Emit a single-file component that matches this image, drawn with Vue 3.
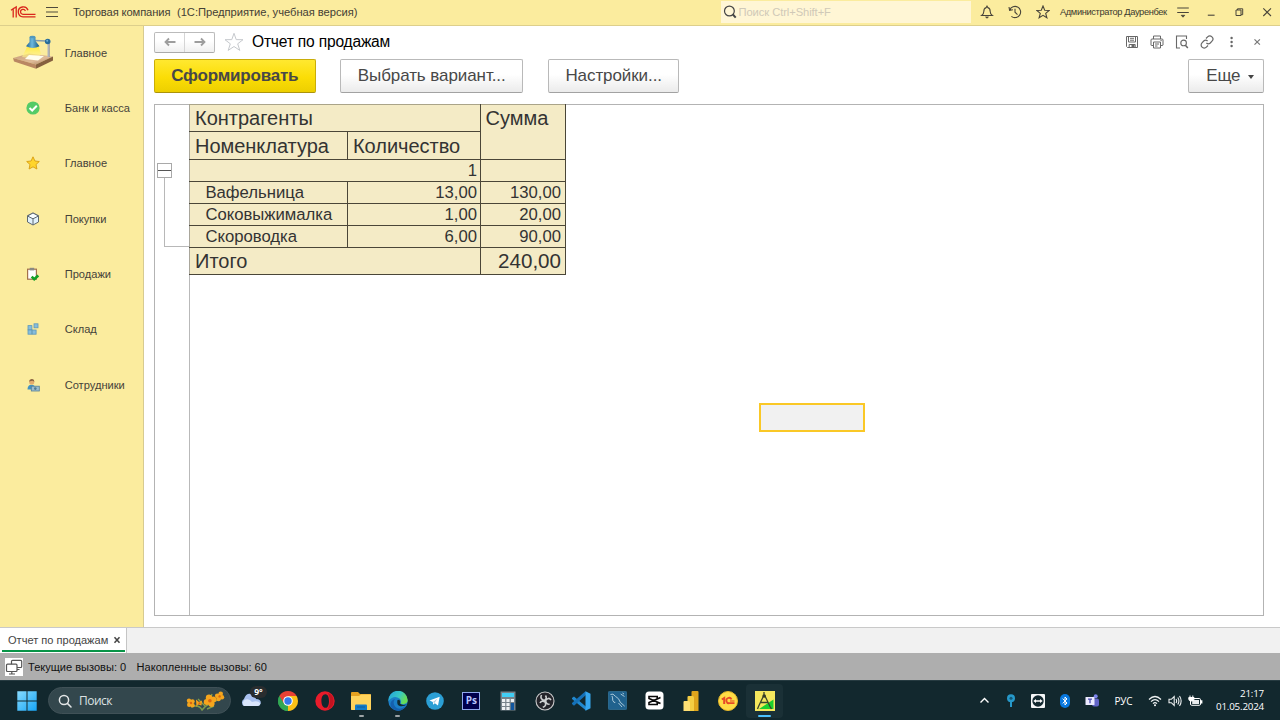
<script setup>
const rows = [
  { name: 'Вафельница', qty: '13,00', sum: '130,00' },
  { name: 'Соковыжималка', qty: '1,00', sum: '20,00' },
  { name: 'Скороводка', qty: '6,00', sum: '90,00' },
]
const sections = [
  { id: 'main', label: 'Главное' },
  { id: 'bank', label: 'Банк и касса' },
  { id: 'star', label: 'Главное' },
  { id: 'buy', label: 'Покупки' },
  { id: 'sell', label: 'Продажи' },
  { id: 'stock', label: 'Склад' },
  { id: 'staff', label: 'Сотрудники' },
]
</script>

<template>
  <div class="screen">
    <header class="titlebar">
      <svg class="logo" width="26" height="14" viewBox="0 0 26 14" fill="none" stroke="#d9261c" stroke-width="1.4">
        <path d="M1 5.3L3.2 3.8V12.5M3.2 3.8L6.2 2V12.5" stroke-width="1.3" />
        <path d="M18 5.2A5 5 0 1 0 13 11.9H25.5" />
        <path d="M15.4 6A2.5 2.5 0 1 0 13 9.3H25.5" stroke-width="1.2" />
      </svg>
      <svg class="burger" width="12" height="12" viewBox="0 0 12 12" stroke="#4e4a3c" stroke-width="1.1"><path d="M0 1.5H12M0 6H12M0 10.5H12" /></svg>
      <span class="app-name">Торговая компания</span>
      <span class="app-ver">(1С:Предприятие, учебная версия)</span>
      <div class="search">
        <svg width="14" height="14" viewBox="0 0 14 14" fill="none" stroke="#444"><circle cx="6.4" cy="6" r="4.9" stroke-width="1.2" /><path d="M9.9 9.5L12.7 12.6" stroke-width="2" /></svg>
        <span>Поиск Ctrl+Shift+F</span>
      </div>
      <div class="top-icons">
        <svg width="14" height="14" viewBox="0 0 14 14" fill="none" stroke="#49453a" stroke-width="1.1"><path d="M1.7 10.5H12.3Q10.2 9 10.2 6.5Q10.2 3.2 7.8 2.6L7 1.2L6.2 2.6Q3.8 3.2 3.8 6.5Q3.8 9 1.7 10.5Z" /><path d="M5.6 12H8.4L7 13.2Z" fill="#49453a" stroke-width=".8" /></svg>
        <svg width="14" height="14" viewBox="0 0 14 14" fill="none" stroke="#49453a" stroke-width="1.1"><path d="M1.8 5A5.6 5.6 0 1 1 3.4 11.3M1 2L1.6 5.3L4.9 4.8M7 3.7V7.2L9.5 9.6" /></svg>
        <svg width="14" height="14" viewBox="0 0 14 14" fill="none" stroke="#49453a" stroke-width="1.1"><path d="M7 1L8.7 5.2L13.2 5.5L9.7 8.4L10.9 12.8L7 10.4L3.1 12.8L4.3 8.4L.8 5.5L5.3 5.2Z" /></svg>
      </div>
      <span class="user">Администратор Дауренбек</span>
      <div class="win-icons">
        <svg width="14" height="14" viewBox="0 0 14 14" stroke="#49453a" stroke-width="1.1"><path d="M1.2 3H12.8M1.2 7.5H12.8" /><path d="M5.2 10.3H8.8L7 12.2Z" fill="#49453a" stroke-width=".8" /></svg>
        <svg width="14" height="14" viewBox="0 0 14 14" stroke="#49453a" stroke-width="1.1"><path d="M3.8 10.2H10.6" /></svg>
        <svg width="14" height="14" viewBox="0 0 14 14" fill="none" stroke="#49453a" stroke-width="1"><path d="M4 5H9V10.5H4ZM5.5 5V3.8H10.7V9.7H9" /></svg>
        <svg width="14" height="14" viewBox="0 0 14 14" stroke="#49453a" stroke-width="1.1"><path d="M3.3 3.3L11 11M11 3.3L3.3 11" /></svg>
      </div>
    </header>

    <div class="body">
      <nav class="sidebar">
        <div v-for="s in sections" :key="s.id" class="section">
          <div class="section-icon">
            <svg v-if="s.id === 'main'" width="44" height="38" viewBox="0 0 44 38">
              <defs>
                <linearGradient id="wood" x1="0" x2="1" y2="1"><stop stop-color="#c79c78" /><stop offset=".6" stop-color="#dfbb98" /><stop offset="1" stop-color="#9f7557" /></linearGradient>
                <linearGradient id="lamp" x1="0" x2="1"><stop stop-color="#1c5f8b" /><stop offset=".45" stop-color="#6db8dd" /><stop offset="1" stop-color="#155681" /></linearGradient>
                <linearGradient id="beam" x2="0" y2="1"><stop stop-color="#ffe83a" /><stop offset="1" stop-color="#fff7a0" stop-opacity=".5" /></linearGradient>
              </defs>
              <path d="M2 24L18 19.5L42 22.5L25 30.5Z" fill="url(#wood)" />
              <path d="M2 24L25 30.5V34.8L3 27.5Z" fill="#b98763" /><path d="M25 30.5L42 22.5V26.5L25 34.8Z" fill="#86603f" />
              <path d="M16 13L11 23L26 25L30 20L27.5 12Z" fill="url(#beam)" />
              <path d="M18 21L33 22L27 26.5L14 25Z" fill="#fffdec" />
              <path d="M23 6.5L36 7" stroke="#849bab" stroke-width="1.5" /><path d="M37.5 8V23" stroke="#b5b7bf" stroke-width="2" /><path d="M38.3 8V23" stroke="#85878f" stroke-width=".6" />
              <circle cx="36.7" cy="7.5" r="2.8" fill="#286b99" /><circle cx="36.2" cy="6.8" r="1" fill="#6fb0d3" />
              <path d="M18.5 3H24.5V7L28.5 12.3Q22 15.5 15 12.3L18.5 8Z" fill="url(#lamp)" /><ellipse cx="21.5" cy="3" rx="3" ry="1.3" fill="#5298bd" />
            </svg>
            <svg v-else-if="s.id === 'bank'" width="14" height="14" viewBox="0 0 14 14"><circle cx="7" cy="7" r="6.6" fill="#54cb67" /><path d="M3.5 7L6.2 9.5L10.8 4.8" fill="none" stroke="#fff" stroke-width="2" /></svg>
            <svg v-else-if="s.id === 'star'" width="14" height="14" viewBox="0 0 14 14"><path d="M7 .8L8.9 5L13.3 5.5L10 8.5L10.9 13L7 10.8L3.1 13L4 8.5L.7 5.5L5.1 5Z" fill="#ffd52c" stroke="#dba318" /></svg>
            <svg v-else-if="s.id === 'buy'" width="14" height="14" viewBox="0 0 14 14" stroke="#5e6870" stroke-width="1"><path d="M7 1L12.5 3.7V10L7 13L1.5 10V3.7Z" fill="#e1f1fb" /><path d="M1.5 4L7 6.8L12.5 4L7 1Z" fill="#f8fdff" /><path d="M7 6.8V13" /></svg>
            <svg v-else-if="s.id === 'sell'" width="14" height="14" viewBox="0 0 14 14"><rect x="1.6" y="2.2" width="8.8" height="10" fill="#fff" stroke="#a3704d" stroke-width="1.2" /><rect x="3.7" y=".8" width="4.5" height="2.6" fill="#8a8a84" /><path d="M5.7 9.7L8.2 12.2L12.3 8.5" fill="none" stroke="#13a126" stroke-width="2.6" /></svg>
            <svg v-else-if="s.id === 'stock'" width="14" height="14" viewBox="0 0 14 14" fill="#86bddc" stroke="#5e98b9" stroke-width=".8"><rect x="2" y="3.6" width="3.9" height="4.2" /><rect x="2" y="8" width="3.9" height="4.2" /><rect x="6.2" y="8" width="3.9" height="4.2" /><rect x="8" y="1.8" width="4" height="4" /></svg>
            <svg v-else width="14" height="14" viewBox="0 0 14 14"><path d="M1.5 11.5Q1.5 6.7 5.5 6.7Q9.5 6.7 9.5 11.5Z" fill="#4293c2" /><circle cx="5.7" cy="4" r="2.6" fill="#e5ad6d" /><path d="M3 3.5Q3.5 .6 6.2 1Q8.4 1.3 8.4 3.8L6.5 2.7Z" fill="#8b6543" /><rect x="5.3" y="8.2" width="8" height="4.8" fill="#9bbccd" stroke="#557f98" stroke-width=".8" /><circle cx="9.3" cy="10.6" r="1.3" fill="#4f7b91" /></svg>
          </div>
          <span>{{ s.label }}</span>
        </div>
      </nav>

      <main class="content">
        <div class="form-head">
          <div class="nav-btns">
            <span><svg width="14" height="10" viewBox="0 0 14 10" fill="none" stroke="#9d9d9d" stroke-width="1.8"><path d="M12.5 5H3M6 1.5L2.5 5L6 8.5" /></svg></span>
            <span><svg width="14" height="10" viewBox="0 0 14 10" fill="none" stroke="#9d9d9d" stroke-width="1.8"><path d="M1.5 5H11M8 1.5L11.5 5L8 8.5" /></svg></span>
          </div>
          <svg class="fav" width="22" height="20" viewBox="0 0 22 20" fill="#fff" stroke="#c6c9cd"><path d="M11 1.3L13.2 7.6L20 7.7L14.7 11.8L16.8 18.4L11 14.5L5.2 18.4L7.3 11.8L2 7.7L8.8 7.6Z" /></svg>
          <h1>Отчет по продажам</h1>
          <div class="form-icons">
            <svg width="14" height="14" viewBox="0 0 14 14" fill="none" stroke="#686868" stroke-width="1"><path d="M1.5 1.5H12.5V12.5H2.5L1.5 11.5ZM3.5 1.5V7H10.5V1.5M5 3.3H9M5 5.2H9M4.2 12.5V9.5H10.2V12.5" /><rect x="7" y="10" width="2" height="2" fill="#686868" /></svg>
            <svg width="14" height="14" viewBox="0 0 14 14" fill="none" stroke="#686868" stroke-width="1"><path d="M3.5 4V1H10.5V4M3.5 10.5H1.5Q1 10.5 1 10V5Q1 4 2 4H12Q13 4 13 5V10Q13 10.5 12 10.5H10.5M3.5 7H10.5V13H3.5ZM5 9H9M5 11H7.5M10.5 5.6H11.7" /></svg>
            <svg width="14" height="14" viewBox="0 0 14 14" fill="none" stroke="#686868" stroke-width="1.1"><path d="M5 13H1.5V1H11.5V4" /><circle cx="8.6" cy="7.9" r="2.8" /><path d="M10.4 10.2L12.8 13" stroke-width="1.5" /></svg>
            <svg width="14" height="14" viewBox="0 0 14 14" fill="none" stroke="#686868" stroke-width="1.2"><path d="M6 3.5L7.6 1.9A2.9 2.9 0 0 1 12 6.2L10.3 8Q8.3 9.7 6.4 8M8 10.5L6.4 12.1A2.9 2.9 0 0 1 2 7.8L3.7 6Q5.7 4.3 7.6 6" /></svg>
            <svg width="14" height="14" viewBox="0 0 14 14" fill="#666"><circle cx="6.6" cy="3" r="1.2" /><circle cx="6.6" cy="7" r="1.2" /><circle cx="6.6" cy="11" r="1.2" /></svg>
            <svg width="14" height="14" viewBox="0 0 14 14" stroke="#777" stroke-width="1.2"><path d="M4.5 4.3L9.9 9.7M9.9 4.3L4.5 9.7" /></svg>
          </div>
        </div>

        <div class="commands">
          <button class="primary">Сформировать</button>
          <button class="choose">Выбрать вариант...</button>
          <button class="setup">Настройки...</button>
          <button class="more">Еще <i></i></button>
        </div>

        <div class="report">
          <div class="gutter">
            <div class="fold"></div>
            <div class="fold-line"></div>
          </div>
          <table>
            <colgroup><col class="c1" /><col class="c2" /><col class="c3" /></colgroup>
            <tbody>
              <tr class="h1"><td colspan="2"><div>Контрагенты</div></td><td rowspan="2" class="top"><div>Сумма</div></td></tr>
              <tr class="h2"><td><div>Номенклатура</div></td><td><div>Количество</div></td></tr>
              <tr class="row"><td colspan="2" class="num"><div>1</div></td><td></td></tr>
              <tr v-for="r in rows" :key="r.name" class="row">
                <td class="item"><div>{{ r.name }}</div></td><td class="num"><div>{{ r.qty }}</div></td><td class="num sum"><div>{{ r.sum }}</div></td>
              </tr>
              <tr class="total"><td colspan="2"><div>Итого</div></td><td class="num sum"><div>240,00</div></td></tr>
            </tbody>
          </table>
          <div class="cell-cursor"></div>
        </div>
      </main>
    </div>

    <div class="tabs">
      <div class="tab"><span>Отчет по продажам</span>
        <svg width="8" height="8" viewBox="0 0 8 8" stroke="#444" stroke-width="1.5"><path d="M1.5 1.2L6.5 6.8M6.5 1.2L1.5 6.8" /></svg>
      </div>
    </div>

    <div class="status">
      <div class="status-icon"><svg width="18" height="18" viewBox="0 0 18 18" fill="#fff" stroke="#555" stroke-width="1.2"><rect x="6.5" y="2.3" width="10.2" height="7.2" rx="1" /><rect x="1.5" y="6.2" width="10.5" height="7.3" rx="1" /><path d="M6.8 13.5V16M4 16H10M12 11.5H14.5" /></svg></div>
      <span class="calls">Текущие вызовы: 0</span>
      <span class="stored">Накопленные вызовы: 60</span>
    </div>

    <footer class="taskbar">
      <svg class="start" width="20" height="20" viewBox="0 0 20 20"><defs><linearGradient id="win" x2="1" y2="1"><stop stop-color="#87dbff" /><stop offset="1" stop-color="#16a4f5" /></linearGradient></defs><path d="M.3.3H9.5V9.5H.3ZM10.5.3H19.7V9.5H10.5ZM.3 10.5H9.5V19.7H.3ZM10.5 10.5H19.7V19.7H10.5Z" fill="url(#win)" /></svg>
      <div class="find">
        <svg width="14" height="14" viewBox="0 0 14 14" fill="none" stroke="#e3e6e7" stroke-width="1.5"><circle cx="6" cy="6" r="4.6" /><path d="M9.4 9.4L13 13" stroke-linecap="round" /></svg>
        <span>Поиск</span>
        <svg class="flowers" width="40" height="20" viewBox="0 0 40 20">
          <path d="M6 16Q14 13 17 19Q22 12 36 8M13 8L20 15M29 15L22 18M27 3L24 12" stroke="#7e9b4c" stroke-width="1.4" fill="none" />
          <g fill="#f6a51d"><circle cx="4" cy="9.8" r="2.2" /><circle cx="7.5" cy="10.5" r="2.2" /><circle cx="4.2" cy="13.7" r="2.2" /><circle cx="7.5" cy="14.2" r="2.2" /><path d="M11 8.5L14 11L17 9.5L16.5 14.5L13 13.5L11.5 16Z" /><circle cx="24" cy="6.8" r="3.2" /><circle cx="28.3" cy="8.6" r="3" /><circle cx="21.7" cy="11" r="3" /><circle cx="26.5" cy="12.8" r="3.1" /><circle cx="35.7" cy="2.7" r="2.3" /><circle cx="32.3" cy="4.8" r="2.4" /><circle cx="37" cy="6.3" r="2.2" /><circle cx="33.5" cy="8" r="2.3" /></g>
          <g fill="#da6611"><circle cx="6" cy="12" r="1.2" /><circle cx="14.5" cy="12.3" r="1.1" /><circle cx="24.9" cy="9.7" r="1.8" /><circle cx="34.6" cy="5.4" r="1.2" /></g>
        </svg>
      </div>

      <div class="apps">
        <div class="slot weather">
          <svg width="22" height="16" viewBox="0 0 22 16"><path d="M4 13A4 4 0 0 1 4 6Q6 0 11 1Q15 2 16 6Q21 6 20.8 10Q20 13 17.5 13Z" fill="#a8c1ef" /><path d="M4 13A4 4 0 0 1 4.5 7Q9 5 12 9Q18 7 20.5 10.5Q19.5 13 17.5 13Z" fill="#dae6fc" /></svg>
          <b>9°</b>
        </div>
        <div class="slot"><svg width="20" height="20" viewBox="0 0 20 20"><path d="M10 10L1.35 5A10 10 0 0 1 18.65 5Z" fill="#e84135" /><path d="M10 10L18.65 5A10 10 0 0 1 10 20Z" fill="#fbc116" /><path d="M10 10L10 20A10 10 0 0 1 1.35 5Z" fill="#31a753" /><path d="M10 5H18.65L10 20L14.5 12.5Z" fill="#fbc116" /><path d="M1.35 5L5.7 12.5L10 10V5Z" fill="#e84135" /><path d="M1.35 5L5.7 12.5L10 15L10 20A10 10 0 0 1 1.35 5Z" fill="#31a753" /><circle cx="10" cy="10" r="4.8" fill="#fff" /><circle cx="10" cy="10" r="3.7" fill="#3478eb" /></svg></div>
        <div class="slot"><svg width="20" height="20" viewBox="0 0 20 20"><path fill-rule="evenodd" d="M10 .3A9.7 9.7 0 1 0 10 19.7A9.7 9.7 0 1 0 10 .3ZM10.5 3.2C13.2 3.2 14 7 14 10S13.2 16.8 10.5 16.8S6.4 13.5 6.4 10S7.5 3.2 10.5 3.2Z" fill="#e91c2b" /><path d="M13 2A8.5 8.5 0 0 1 13 18Q15 14 15 10T13 2Z" fill="#c21320" /></svg></div>
        <div class="slot running"><svg width="22" height="20" viewBox="0 0 22 20"><path d="M1 2Q1 1 2 1H8L10 3H20Q21 3 21 4V18Q21 19 20 19H2Q1 19 1 18Z" fill="#e5a120" /><path d="M1 5H9L11 3.5H21V18Q21 19 20 19H2Q1 19 1 18Z" fill="#ffd35c" /><path d="M5 19V14.5Q5 13.5 6 13.5H16Q17 13.5 17 14.5V19Z" fill="#147bc7" /><path d="M7 16H15" stroke="#0c5c9c" /></svg></div>
        <div class="slot running"><svg width="20" height="20" viewBox="0 0 20 20"><defs><linearGradient id="edge" x2="1" y2=".4"><stop stop-color="#229fdf" /><stop offset=".6" stop-color="#37c8c4" /><stop offset="1" stop-color="#68dd55" /></linearGradient></defs><circle cx="10" cy="10" r="9.7" fill="#1b7fc8" /><path d="M.3 10A9.7 9.7 0 0 1 19.7 9C20 13 15 14 12.5 12.5Q14 10 11.5 7.5Q6 3.5.3 10Z" fill="url(#edge)" /><path d="M7 8Q4 12 7.5 16T18 15Q14 21 7.5 19.3Q2 17.5 2.5 12.5Q3 9 7 8Z" fill="#1560ae" /><path d="M9.5 9Q8 14.5 12.5 15.2Q16.5 15.5 19.2 13.3Q14 14.8 12 12.5Q12.6 10.5 11.4 8.8Z" fill="#112c32" /></svg></div>
        <div class="slot"><svg width="18" height="18" viewBox="0 0 18 18"><circle cx="9" cy="9" r="8.8" fill="#2b9fd5" /><path d="M3.5 8.6L13.7 4.7L12 13.5L8.8 11.2L7.2 12.8L6.8 10Z" fill="#fff" /><path d="M7 10L11.5 6.5L8.5 11Z" fill="#adcde0" /></svg></div>
        <div class="slot"><div class="ps">Ps</div></div>
        <div class="slot"><svg width="16" height="20" viewBox="0 0 16 20"><rect x=".5" y=".5" width="15" height="19" fill="#77838b" /><rect x="2" y="2" width="12" height="4" fill="#41cef5" /><path d="M2 8H5.2V11H2ZM6.4 8H9.6V11H6.4ZM10.8 8H14V11H10.8ZM2 12H5.2V15H2ZM6.4 12H9.6V15H6.4ZM2 16H5.2V19H2ZM6.4 16H9.6V19H6.4Z" fill="#edf1f3" /><path d="M10.8 12H14V19H10.8Z" fill="#12579f" /></svg></div>
        <div class="slot"><svg width="20" height="20" viewBox="0 0 20 20" fill="none"><circle cx="10" cy="10" r="9" fill="#25252b" stroke="#c9c9ca" stroke-width="1.1" /><path d="M6.5 4Q4.5 8 9.4 9.5Q12.5 7.5 10.5 4.5M16 9Q13.5 5.6 10.6 9.5Q11 13.5 14.6 13.3M7.8 16.3Q12 15 10 10.8Q6.5 9 5 12" stroke="#ced0d1" stroke-width="1.6" /></svg></div>
        <div class="slot"><svg width="20" height="20" viewBox="0 0 20 20"><path d="M1 7L3 5.4L16 16.5L15 19.5L1 8Z" fill="#2188ce" /><path d="M1 13L3 14.7L15.8 3.3L14.5.3L1 12Z" fill="#1571b8" /><path d="M14.5.3L19.5 2.7V17.2L14.5 19.7Z" fill="#36a7ee" /></svg></div>
        <div class="slot"><svg width="19" height="19" viewBox="0 0 19 19" fill="none"><rect x=".4" y=".4" width="18.2" height="18.2" rx="1" fill="#20628e" stroke="#367aa4" stroke-width=".7" /><path d="M2.5 3.5Q5 1.8 7.5 5.4Q11.3 7.3 12.2 11.2L16.7 15.2M4 5Q4.8 6.6 4.7 9.3Q6 12.5 7.3 11.3M10.5 12L14 16M12.7 3L16.5 5.5M14.5 2L16 3" stroke="#b8d2e1" stroke-width=".9" /></svg></div>
        <div class="slot"><svg width="19" height="19" viewBox="0 0 19 19"><rect x=".5" y=".5" width="18" height="18" rx="3.5" fill="#fff" /><path d="M15.5 6.5L12.2 8V5.5H4V7.5L15.5 12.5M15.5 6.5L4 11.5V13.5H12.2V11L15.5 12.5" stroke="#080808" stroke-width="1.6" fill="none" /></svg></div>
        <div class="slot"><svg width="18" height="20" viewBox="0 0 18 20"><path d="M9.5 1Q9.5 0 10.5 0H15.5Q16.5 0 16.5 1V20H9.5Z" fill="#dfa51d" /><path d="M5.5 6Q5.5 5 6.5 5H10.5Q12 5 12 6.5V20H5.5Z" fill="#f5ce43" /><path d="M1.5 11Q1.5 10 2.5 10H6.5Q8 10 8 11.5V20H1.5Z" fill="#ffe074" /></svg></div>
        <div class="slot"><svg width="20" height="20" viewBox="0 0 20 20" fill="none"><circle cx="10" cy="10" r="9.5" fill="#ffdc45" stroke="#e6b82a" /><path d="M3.8 8.5L6.2 7V13" stroke="#e64928" stroke-width="2" /><path d="M13.5 8.4A2.7 2.7 0 1 0 11.5 12.2H16.5" stroke="#e64928" stroke-width="1.8" /><path d="M12 10H16.5" stroke="#e64928" /></svg></div>
        <div class="slot active"><svg width="20" height="20" viewBox="0 0 20 20" fill="none"><rect width="20" height="20" fill="#f5e75d" /><path d="M18.5 8.5V18H4Z" fill="#1bd02e" /><path d="M9 1V4M8.5 5L3.5 15.5L2.5 18M10 5L15 15.5L16.5 18M6 11.5H13" stroke="#3b442b" stroke-width="1.3" /><circle cx="9.2" cy="5" r="1.8" fill="#343b26" /></svg></div>
      </div>

      <div class="tray">
        <svg class="t-up" width="12" height="8" viewBox="0 0 12 8" fill="none" stroke="#fff" stroke-width="1.4"><path d="M2.5 5.5L6.5 1.5L10.5 5.5" /></svg>
        <svg class="t-pin" width="10" height="14" viewBox="0 0 10 14"><circle cx="5" cy="4.2" r="4" fill="#2699ca" /><circle cx="5" cy="4.2" r="1.5" fill="#145775" /><path d="M5 7V13" stroke="#2699ca" stroke-width="2" /></svg>
        <svg class="t-tv" width="14" height="14" viewBox="0 0 14 14"><rect width="14" height="14" rx="1" fill="#f5f7f8" /><circle cx="7" cy="7" r="5.7" fill="#12282f" /><path d="M2.3 7L5 5V6.3H9V5L11.7 7L9 9V7.7H5V9Z" fill="#fff" /></svg>
        <svg class="t-bt" width="10" height="14" viewBox="0 0 10 14" fill="none"><rect width="10" height="14" rx="5" fill="#0878df" /><path d="M2.7 4.6L7 9L5 11V3L7 5L2.7 9.4" stroke="#fff" /></svg>
        <svg class="t-teams" width="15" height="14" viewBox="0 0 15 14"><circle cx="10.7" cy="2.3" r="2" fill="#7b83eb" /><rect x="7" y="4.5" width="7" height="8" rx="2" fill="#6264c7" /><rect x=".5" y="3" width="9" height="8" rx=".5" fill="#eceaff" /><path d="M3 5.2H7M5 5.2V9.2" stroke="#4a4db2" stroke-width="1.3" /></svg>
        <span class="lang">РУС</span>
        <svg class="t-wifi" width="14" height="12" viewBox="0 0 14 12" fill="none" stroke="#eef1f2" stroke-width="1.2"><path d="M1 4.5Q7-1.5 13 4.5M3 6.6Q7 2.6 11 6.6M5 8.7Q7 6.7 9 8.7" /><circle cx="7" cy="10.2" r="1" fill="#fff" stroke="none" /></svg>
        <svg class="t-vol" width="14" height="12" viewBox="0 0 14 12" fill="none" stroke="#eef1f2" stroke-width="1.1"><path d="M1 4.3H3.3L6.2 1.5V10.5L3.3 7.7H1ZM8 4Q9.3 6 8 8M9.8 2.5Q12 6 9.8 9.5M11.5 1Q14.8 6 11.5 11" /></svg>
        <svg class="t-bat" width="15" height="12" viewBox="0 0 15 12"><rect x="2.5" y="3.5" width="10" height="6.8" rx="1.2" fill="#12282e" stroke="#fff" /><rect x="4.2" y="5" width="6.8" height="4" fill="#e8eced" /><path d="M13.7 5.3V8.5" stroke="#fff" stroke-width="1.4" /><path d="M2 .5V2.5M4.8 .5V2.5M.8 2.5H6V4.2Q6 6 3.4 6Q.8 6 .8 4.2Z" stroke="#fff" fill="#fff" /></svg>
        <div class="clock"><span class="time">21:17</span><span class="date">01.05.2024</span></div>
      </div>
    </footer>
  </div>
</template>

<style>
body { margin: 0; overflow: hidden; }
</style>

<style scoped>
* { box-sizing: border-box; }
svg { display: block; flex: none; }
.screen { width: 1280px; height: 720px; display: flex; flex-direction: column; font-family: "Liberation Sans", Arial, sans-serif; color: #444; background: #fff; overflow: hidden; white-space: nowrap; }
.titlebar { height: 26px; flex: none; display: flex; align-items: center; padding: 0 6px 1px 10px; background: #fbec9e; border-bottom: 1px solid #ddcf8c; }
.burger { margin-left: 10px; }
.app-name { margin-left: 15px; width: 104px; font-size: 11.2px; letter-spacing: -.12px; color: #444035; }
.app-ver { font-size: 11.2px; letter-spacing: -.04px; color: #444035; }
.search { width: 250px; height: 22px; margin-left: auto; display: flex; align-items: center; gap: 2px; padding-left: 1.5px; background: #fff6d5; color: #d0c9b8; font-size: 11.2px; letter-spacing: -.08px; }
.top-icons { display: flex; gap: 14px; margin-left: 9px; }
.user { margin-left: 10px; width: 107px; font-size: 9.3px; letter-spacing: -.38px; color: #3c392f; }
.win-icons { display: flex; gap: 14px; margin-left: 9px; }

.body { height: 601px; flex: none; display: flex; }
.sidebar { width: 144px; background: #fbec9e; border-right: 1px solid #d7cb91; }
.section { height: 55.35px; display: flex; align-items: center; font-size: 11.1px; color: #45423a; }
.section:first-child { height: 54.2px; }
.section-icon { width: 64.7px; display: flex; justify-content: center; }
.section-icon svg { margin-left: 1px; }

.content { flex: 1; padding: 5px 16px 11px 10px; display: flex; flex-direction: column; }
.form-head { height: 22px; display: flex; align-items: center; }
.nav-btns { display: flex; width: 61px; height: 21px; border: 1px solid #bbb; border-bottom-color: #aaa; border-radius: 2px; background: linear-gradient(#fff 40%, #f0f0f0); }
.nav-btns span { flex: 1; display: flex; align-items: center; justify-content: center; }
.nav-btns span + span { border-left: 1px solid #d5d5d5; }
.fav { margin-left: 8px; }
h1 { margin: 0 0 0 7px; font-size: 15.6px; letter-spacing: -.2px; font-weight: 400; color: #000; }
.form-icons { margin-left: auto; display: flex; gap: 11.1px; }
.commands { display: flex; height: 34px; margin-top: 6px; }
button { height: 33.5px; padding: 0; font-family: inherit; font-size: 17px; letter-spacing: -.08px; color: #484848; background: linear-gradient(#fff 45%, #ebebeb); border: 1px solid #b9b9b9; border-bottom-color: #a2a2a2; border-radius: 2px; }
.primary { width: 161.5px; font-weight: 700; letter-spacing: -.2px; background: linear-gradient(#ffe830, #fbdd06 55%, #edcf00); border-color: #c9ad09; border-bottom-color: #ab930b; }
.choose { width: 183.4px; margin-left: 24.5px; }
.setup { width: 131.4px; margin-left: 24.6px; }
.more { width: 76px; margin-left: auto; display: flex; align-items: center; justify-content: flex-end; gap: 7px; padding-right: 9.5px; }
.more i { border: 3px solid transparent; border-top: 4px solid #444; border-bottom: 0; margin-top: 2px; }

.report { position: relative; margin-top: 11px; height: 512px; border: 1px solid #b3b3b3; display: flex; align-items: flex-start; }
.gutter { width: 35px; height: 510px; border-right: 1px solid #b9b9b9; padding-top: 58px; }
.fold { width: 15px; height: 15px; margin-left: 2px; border: 1px solid #a9a9a9; background: linear-gradient(#555, #555) center / 100% 1px no-repeat #fff; }
.fold-line { width: 25px; height: 69px; margin-left: 9px; border-left: 1px solid #b8b8b8; border-bottom: 1px solid #b8b8b8; }
table { width: 376px; margin: -1px 0 0 -1px; border-collapse: collapse; table-layout: fixed; background: #f4ebc6; color: #333; }
.c1 { width: 158px; } .c2 { width: 133px; } .c3 { width: 85px; }
td { padding: 0 3px 0 5px; border: 1px solid #4a4638; }
tr:first-child td { border-top-color: #aaa489; }
td:first-child { border-left-color: #a9a69b; }
td div { line-height: 20px; height: 20px; }
.h1 { height: 27px; } .h2 { height: 28px; } .row { height: 22px; } .total { height: 27px; }
.h1, .h2, .total { font-size: 20px; }
.h2 td { letter-spacing: -.03px; }
.row { font-size: 16.7px; }
td.top { vertical-align: top; padding: 3px 3px 0 4.5px; }
.num { text-align: right; }
.num.sum { padding-right: 4px; }
.total .num { font-size: 20.6px; }
td.item { padding-left: 15.4px; }
.cell-cursor { position: absolute; left: 604px; top: 298px; width: 106px; height: 29px; border: 2px solid #fac826; background: #f1f1f1; }

.tabs { height: 26px; flex: none; display: flex; background: #f1f1f1; border-top: 1px solid #c9c9c9; }
.tab { width: 127px; height: 25px; padding: 0 5px 2px 8px; display: flex; align-items: center; justify-content: space-between; background: linear-gradient(#089447, #089447) 2px 22px / 123px 2px no-repeat #fff; border-right: 1px solid #c5c5c5; font-size: 11.05px; color: #444; }
.status { height: 27px; flex: none; display: flex; align-items: center; padding-left: 5px; background: #aeaeae; font-size: 11.05px; color: #111; }
.status-icon { width: 18px; height: 18px; background: #fff; }
.calls { width: 108.6px; margin-left: 5px; }

.taskbar { height: 40px; flex: none; display: flex; align-items: center; background: #12282e; border-top: 1px solid #263b41; color: #fff; font-family: "Open Sans", "Noto Sans", sans-serif; }
.start { margin-left: 17px; }
.find { width: 183px; height: 27px; margin-left: 11px; border-radius: 14px; border: 1px solid #405157; background: #33474d; display: flex; align-items: center; padding: 0 5px 0 9px; font-size: 12px; letter-spacing: -.5px; color: #dce1e2; }
.find span { margin-left: 7px; }
.flowers { margin-left: auto; }
.apps { display: flex; margin-left: 1.9px; width: 550px; height: 39px; align-items: center; }
.slot { position: relative; flex: 1; height: 34px; display: flex; align-items: center; justify-content: center; }
.weather b { position: absolute; left: 17px; top: 2px; width: 17px; height: 12px; border-radius: 6px; background: #292d2f; font-size: 8.5px; line-height: 12px; text-align: center; }
.running::after { content: ""; position: absolute; bottom: 1px; width: 5px; height: 2px; border-radius: 1px; background: #9da4a7; }
.active { background: #1a3036; border-radius: 4px; }
.active::after { content: ""; position: absolute; bottom: 1px; width: 13px; height: 2px; border-radius: 1px; background: #4cc2ff; }
.ps { width: 18px; height: 18px; border: 1px solid #91a9ec; background: #00004d; color: #b7c6ff; font: 700 10px/15px "Open Sans", sans-serif; text-align: center; }
.tray { margin-left: auto; display: flex; align-items: center; height: 39px; padding-right: 16px; }
.t-pin { margin-left: 16.5px; } .t-tv { margin-left: 15px; } .t-bt { margin-left: 14.5px; } .t-teams { margin-left: 15px; }
.lang { width: 18px; margin-left: 15px; font-size: 10px; letter-spacing: -.25px; }
.t-wifi { margin-left: 15.5px; } .t-vol { margin-left: 6px; } .t-bat { margin-left: 6px; }
.clock { width: 61px; display: flex; flex-direction: column; align-items: flex-end; font-size: 9.8px; letter-spacing: -.2px; line-height: 13px; padding-bottom: 2px; }
</style>
